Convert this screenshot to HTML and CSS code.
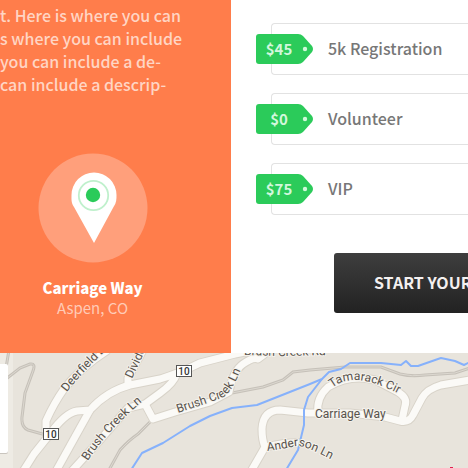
FILE: index.html
```html
<!DOCTYPE html>
<html lang="en">
<head>
<meta charset="utf-8">
<title>Event registration</title>
<link rel="stylesheet" href="styles.css">
</head>
<body>
<main class="event">
  <section class="about">
    <p class="description">t. Here is where you can<br>s where you can include<br>you can include a de-<br>can include a descrip-</p>
    <div class="place">
      <svg class="pin" viewBox="0 0 110 110" aria-hidden="true">
        <circle cx="55" cy="55" r="54.500" fill="#ff9f7b"/>
        <path d="M56 90 36 54C33 50 33.500 46 33.500 42a22.500 22.500 0 0 1 45 0c0 4 0 8-3 12Z" fill="#fff"/>
        <circle cx="55.500" cy="42.500" r="14.700" fill="#fff" stroke="#bff0cc" stroke-width="1.800"/>
        <circle cx="55" cy="42" r="7.200" fill="#2bcb5a"/>
      </svg>
      <strong class="street">Carriage Way</strong>
      <span class="city">Aspen, CO</span>
    </div>
  </section>
  <section class="register">
    <ul class="tickets">
      <li class="ticket"><span class="tag"><svg class="tag-shape" viewBox="0 0 57 30" aria-hidden="true"><path d="M3 0h39q3 0 5 2l9 10q2 3 0 6l-9 10q-2 2-5 2H3q-3 0-3-3V3q0-3 3-3Z" fill="#2bcb5a"/><circle cx="49" cy="15" r="2.200" fill="#d2f7dc"/></svg><span class="price">$45</span></span><span class="name">5k Registration</span></li>
      <li class="ticket"><span class="tag"><svg class="tag-shape" viewBox="0 0 57 30" aria-hidden="true"><path d="M3 0h39q3 0 5 2l9 10q2 3 0 6l-9 10q-2 2-5 2H3q-3 0-3-3V3q0-3 3-3Z" fill="#2bcb5a"/><circle cx="49" cy="15" r="2.200" fill="#d2f7dc"/></svg><span class="price">$0</span></span><span class="name">Volunteer</span></li>
      <li class="ticket"><span class="tag"><svg class="tag-shape" viewBox="0 0 57 30" aria-hidden="true"><path d="M3 0h39q3 0 5 2l9 10q2 3 0 6l-9 10q-2 2-5 2H3q-3 0-3-3V3q0-3 3-3Z" fill="#2bcb5a"/><circle cx="49" cy="15" r="2.200" fill="#d2f7dc"/></svg><span class="price">$75</span></span><span class="name">VIP</span></li>
    </ul>
    <button class="start" type="button">START YOUR</button>
  </section>
</main>
<section class="map" aria-label="Map">
  <svg class="map-art" viewBox="0 353 468 115" preserveAspectRatio="xMinYMin slice">
    <defs>
      <g id="roads">
        <path d="M46 432V421Q54 403 64 389Q80 368 108 350"/>
        <path d="M22 473 34 454 50 434Q65 413 77 411L90 410Q107 391 130 385L160 379Q180 373 200 363L235 354 255 350"/>
        <path d="M55 473 90 410"/>
        <path d="M70 473 100 440 128 408 145 404 160 393Q174 383 177 373"/>
        <path d="M145 404 153 419 175 412 210 402 229 392Q233 371 243 364T258 359L270 350"/>
        <path d="M128 385V378L143 350"/>
        <path d="M250 473 265 447Q262 440 262 429Q263 410 280 410L308 413 350 413 385 417 400 421Q409 423 413 415L422 398Q427 389 441 385L470 380"/>
        <path d="M318 413Q316 398 328 387Q350 374 375 380L398 392Q408 398 405 406L402 420"/>
        <path d="M265 447Q288 442 302 443"/>
      </g>
      <g id="tracks">
        <path d="M9 350 6 368M6 379 20 368 30 364Q36 363 33 371L25 393 22 417Q21 427 28 430L46 435"/>
        <path d="M109 470 120 450Q129 440 138 434L150 422"/>
        <path d="M232 393 263 387 283 380 293 372 310 370 345 367 381 367 400 374Q412 377 425 375L455 373 470 368"/>
      </g>
      <path id="deerfield" d="M67 392Q80 374 116 341"/>
      <path id="divide" d="M132 379 150 340"/>
      <path id="brush-west" d="M88 461Q106 432 144 400"/>
      <path id="brush-mid" d="M178 413 222 398Q233 392 243 364"/>
      <path id="brush-north" d="M244 355 282 356 330 355"/>
      <path id="tamarack" d="M332 388Q346 377 365 381T408 399"/>
      <path id="anderson" d="M267 451Q284 449 296 446Q305 445 334 461"/>
    </defs>
    <rect y="353" width="468" height="115" fill="#e8e4dc"/>
    <rect y="353" width="13" height="115" fill="#eeebe4"/>
    <use href="#tracks" class="track-edge"/>
    <use href="#tracks" class="track-core"/>
    <use href="#roads" class="road-edge"/>
    <use href="#roads" class="road-core"/>
    <g class="river">
      <path d="M131 470 142 453 163 443 190 426 210 416 232 408 257 405 310 384 322 379 329 372 341 369 350 363 381 363 401 365 406 361 411 366 418 366 438 359 441 358 455 361 464 365 470 362"/>
      <path d="M322 379 308 397 304 410 304 425 298 450 286 470"/>
    </g>
    <g class="label">
      <text><textPath href="#deerfield">Deerfield Dr</textPath></text>
      <text><textPath href="#divide">Divide</textPath></text>
      <text><textPath href="#brush-west">Brush Creek Ln</textPath></text>
      <text><textPath href="#brush-mid">Brush Creek Ln</textPath></text>
      <text><textPath href="#brush-north">Brush Creek Rd</textPath></text>
      <text><textPath href="#tamarack">Tamarack Cir</textPath></text>
      <text x="315" y="418">Carriage Way</text>
      <text><textPath href="#anderson">Anderson Ln</textPath></text>
    </g>
    <g class="shield">
      <rect x="43.500" y="428.500" width="15" height="11"/><text x="51" y="438">10</text>
      <rect x="176.500" y="365.500" width="15" height="11"/><text x="184" y="375">10</text>
    </g>
    <path d="M450 468v-1h3v1Z" fill="#e02050"/>
    <rect x="-4" y="364" width="12" height="90" rx="2" fill="#c9c5be"/>
    <rect x="-4" y="364" width="12" height="89" rx="2" fill="#fff"/>
  </svg>
</section>
</body>
</html>
```
FILE: styles.css
```css
* { box-sizing: border-box; }
body {
  margin: 0;
  min-height: 100vh;
  display: flex;
  flex-direction: column;
  background: #fff;
  font-family: "Noto Sans CJK SC", "Open Sans", sans-serif;
  font-size: 16px;
  overflow-x: hidden;
}
.event { display: grid; grid-template-columns: 231fr 237fr; }
.about { background: #ff7d4b; padding: 4px 0 32px; }
.description { margin: 0; color: #ffd5c4; line-height: 23px; white-space: nowrap; font-weight: 500; }
.place { display: flex; flex-direction: column; align-items: center; padding: 57px 46px 0 0; }
.pin { width: 110px; height: 110px; margin-bottom: 15px; }
.street, .city { line-height: 20px; font-size: 15px; }
.street { color: #fff; font-weight: 900; }
.city { color: #ffcbb7; }
.register { padding: 23px 0 40px 40px; overflow: hidden; }
.tickets { list-style: none; margin: 0 0 38px; padding: 0; display: grid; gap: 18px; }
.ticket {
  display: flex;
  align-items: center;
  height: 52px;
  border: 1px solid #e2e2e2;
  border-right: 0;
  border-radius: 4px 0 0 4px;
}
.tag { display: grid; align-items: center; width: 57px; height: 30px; margin-left: -16px; margin-right: 15px; }
.tag-shape, .price { grid-area: 1 / 1; }
.tag-shape { width: 57px; height: 30px; }
.price { width: 46px; text-align: center; color: #d2f7dc; font-size: 15px; font-weight: 700; line-height: 20px; }
.name { color: #777; font-size: 16px; line-height: 24px; padding-bottom: 2px; font-weight: 500; }
.start {
  display: block;
  margin-left: 63px;
  width: 200px;
  height: 60px;
  border: 0;
  border-radius: 3px;
  padding: 0 40px 2px;
  background: linear-gradient(#3e3e3e, #222);
  color: #f4f0f0;
  font: 700 16px "Noto Sans CJK SC", "Open Sans", sans-serif;
  text-align: left;
  white-space: nowrap;
}
.map { flex: 1; display: flex; min-height: 115px; overflow: hidden; }
.map-art { width: 100%; height: auto; }
.track-edge { fill: none; stroke: #c6c1b9; stroke-width: 3; }
.track-core { fill: none; stroke: #dcd8d0; stroke-width: 1; }
.road-edge { fill: none; stroke: #d8d3c9; stroke-width: 9; stroke-linejoin: round; }
.road-core { fill: none; stroke: #fbfaf7; stroke-width: 7; stroke-linejoin: round; }
.river { fill: none; stroke: #86b1fb; stroke-width: 2; stroke-linejoin: round; }
.label {
  font: 12px Roboto, sans-serif;
  fill: #58534c;
  stroke: #f5f2ec;
  stroke-width: 2px;
  paint-order: stroke;
}
.shield { font: 500 10px Roboto, sans-serif; text-anchor: middle; fill: #333; }
.shield rect { fill: #fff; stroke: #555; }
```
